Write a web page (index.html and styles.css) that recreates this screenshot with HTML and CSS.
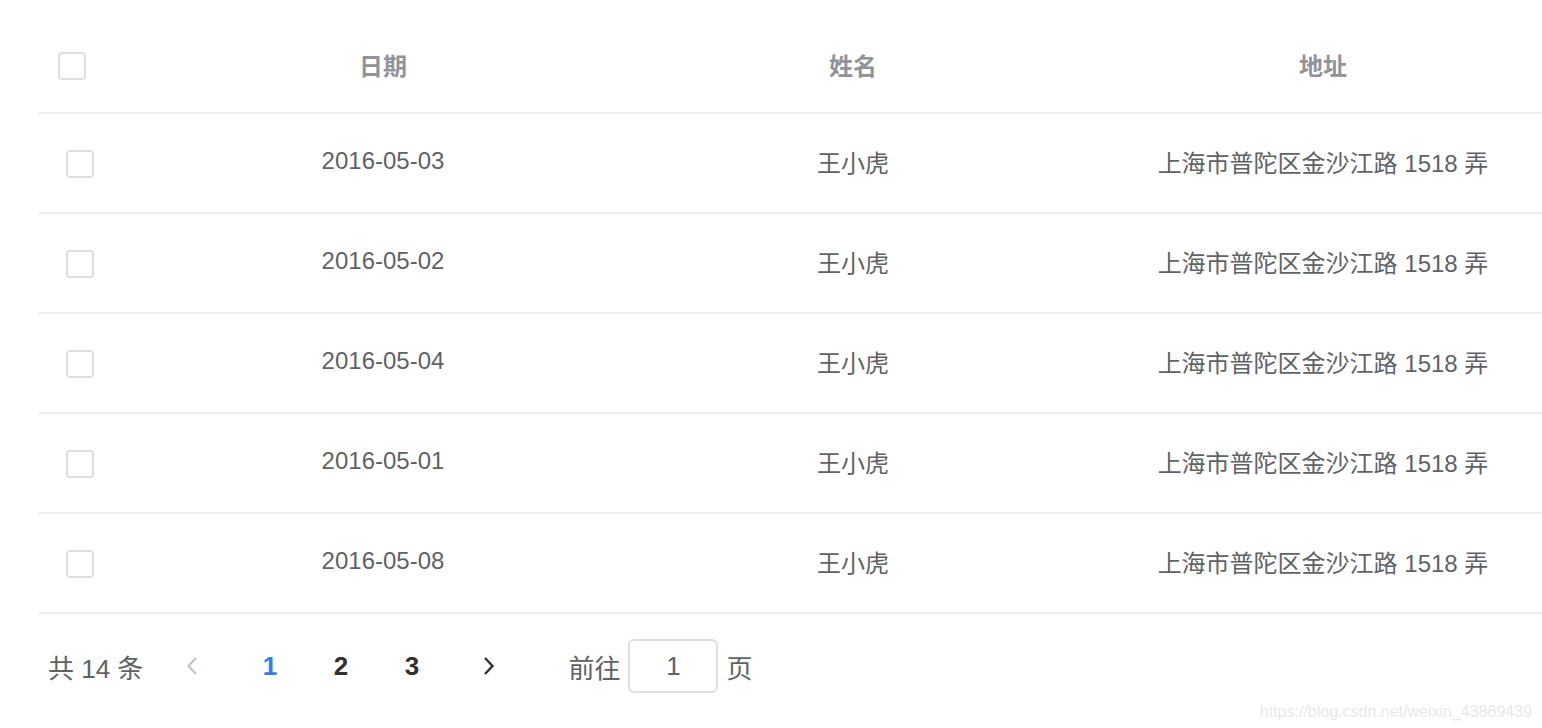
FILE: index.html
```html
<!DOCTYPE html>
<html lang="zh">
<head>
<meta charset="utf-8">
<title>Table</title>
<link rel="stylesheet" href="styles.css">
</head>
<body>
<div class="page">
  <div class="table">
    <div class="row head">
      <div class="cell sel"><span class="checkbox head-cb"></span></div>
      <div class="cell">日期</div>
      <div class="cell">姓名</div>
      <div class="cell">地址</div>
    </div>
    <div class="row">
      <div class="cell sel"><span class="checkbox"></span></div>
      <div class="cell">2016-05-03</div>
      <div class="cell">王小虎</div>
      <div class="cell">上海市普陀区金沙江路 1518 弄</div>
    </div>
    <div class="row">
      <div class="cell sel"><span class="checkbox"></span></div>
      <div class="cell">2016-05-02</div>
      <div class="cell">王小虎</div>
      <div class="cell">上海市普陀区金沙江路 1518 弄</div>
    </div>
    <div class="row">
      <div class="cell sel"><span class="checkbox"></span></div>
      <div class="cell">2016-05-04</div>
      <div class="cell">王小虎</div>
      <div class="cell">上海市普陀区金沙江路 1518 弄</div>
    </div>
    <div class="row">
      <div class="cell sel"><span class="checkbox"></span></div>
      <div class="cell">2016-05-01</div>
      <div class="cell">王小虎</div>
      <div class="cell">上海市普陀区金沙江路 1518 弄</div>
    </div>
    <div class="row">
      <div class="cell sel"><span class="checkbox"></span></div>
      <div class="cell">2016-05-08</div>
      <div class="cell">王小虎</div>
      <div class="cell">上海市普陀区金沙江路 1518 弄</div>
    </div>
  </div>

  <div class="pagination">
    <span class="total">共 14 条</span>
    <span class="pbtn prev">
      <svg class="arrow" width="12" height="20" viewBox="0 0 12 20"><path d="M10 2 L2.5 10 L10 18" fill="none" stroke="#c0c4cc" stroke-width="2.2"/></svg>
    </span>
    <span class="pnum active">1</span>
    <span class="pnum">2</span>
    <span class="pnum">3</span>
    <span class="pbtn next">
      <svg class="arrow" width="12" height="20" viewBox="0 0 12 20"><path d="M2 2 L9.5 10 L2 18" fill="none" stroke="#303133" stroke-width="2.4"/></svg>
    </span>
    <span class="jump">
      <span>前往</span>
      <span class="jump-input">1</span>
      <span>页</span>
    </span>
  </div>
</div>
<div class="watermark">https://blog.csdn.net/weixin_43869439</div>
</body>
</html>
```
FILE: styles.css
```css
html, body {
  margin: 0;
  padding: 0;
  background: #ffffff;
  overflow: hidden;
}
body {
  width: 1542px;
  height: 728px;
  font-family: "Liberation Sans", "Noto Sans CJK SC", sans-serif;
  position: relative;
}
.page {
  padding: 14px 0 0 38px;
}
.table {
  width: 1520px;
}
.row {
  display: grid;
  grid-template-columns: 110px 470px 470px 470px;
  height: 98px;
  border-bottom: 2px solid #ebeef5;
  font-size: 24px;
  color: #606266;
}
.row.head {
  color: #909399;
  font-weight: bold;
}
.cell {
  display: flex;
  align-items: center;
  justify-content: center;
  padding-bottom: 4px;
  white-space: nowrap;
}
.row.head .cell {
  padding-bottom: 0;
  padding-top: 2px;
}
.cell.sel {
  justify-content: flex-start;
  padding-left: 28px;
  padding-bottom: 0;
  padding-top: 2px;
}
.row.head .cell.sel {
  padding-left: 20px;
  padding-top: 6px;
}
.checkbox {
  display: block;
  width: 24px;
  height: 24px;
  border: 2px solid #dcdfe6;
  border-radius: 4px;
  background: #fff;
}
.pagination {
  display: flex;
  align-items: center;
  height: 56px;
  margin-top: 24px;
  padding-left: 10px;
  font-size: 26px;
  color: #606266;
}
.total {
  margin-right: 20px;
}
.pbtn, .pnum {
  width: 71px;
  height: 56px;
  display: flex;
  align-items: center;
  justify-content: center;
}
.prev .arrow {
  margin-right: 14px;
}
.next .arrow {
  margin-left: 12px;
}
.pnum {
  font-weight: bold;
  color: #303133;
}
.pnum.active {
  color: #337ee8;
}
.jump {
  display: flex;
  align-items: center;
  margin-left: 50px;
}
.jump-input {
  width: 86px;
  height: 50px;
  border: 2px solid #dcdfe6;
  border-radius: 6px;
  margin: 0 8px 0 8px;
  display: flex;
  align-items: center;
  justify-content: center;
  box-sizing: content-box;
}
.watermark {
  position: absolute;
  right: 10px;
  bottom: 7px;
  font-size: 16px;
  color: #e8e8e8;
}
```
